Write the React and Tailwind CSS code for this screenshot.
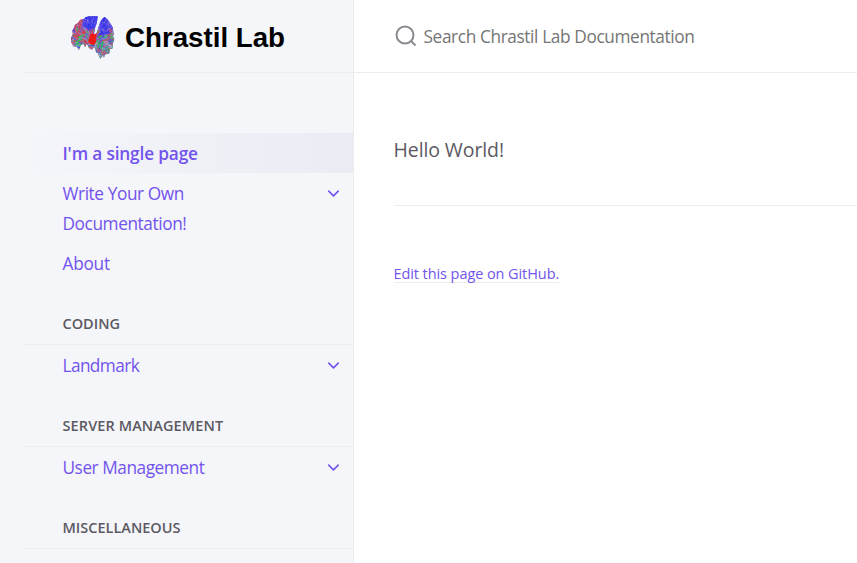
import { ChevronDown } from "lucide-react";

const BLUES = ["#3a35f0", "#4540e8", "#2f2fe0", "#6a5ae0", "#8a6fd8", "#5a50f0"];
const MIXED = ["#c84a76", "#4a4fe0", "#3fba6a", "#b2409c", "#6b6fd8", "#d0404c", "#9f9acc", "#a86570"];
const LOWER = ["#3cb868", "#c8506f", "#6b72cc", "#4fa894", "#ad7fa0", "#4a55c8", "#b85a70", "#b8b4cc"];
const REDS = ["#d23a4c", "#c84a3c", "#c8457a", "#b87088"];

// Fibre strands: short lines fanned around the stem, coloured by region.
function makeFibres() {
  let seed = 11;
  const rand = () => {
    seed = (seed * 16807) % 2147483647;
    return seed / 2147483647;
  };
  const fibres = [];
  for (let i = 0; i < 900; i++) {
    const x = 69 + rand() * 47;
    const y = 14 + rand() * 47;
    let set = MIXED;
    if (y < 28 && x > 82) set = BLUES;
    else if (x > 100 && x < 110 && y < 34) set = BLUES;
    else if (y > 41) set = LOWER;
    else if (x < 84 && rand() < 0.5) set = REDS;
    const angle = Math.atan2(46 - y, 94 - x) + (rand() - 0.5) * 0.9;
    const length = 2 + rand() * 3;
    fibres.push({
      x1: x,
      y1: y,
      x2: x + Math.cos(angle) * length,
      y2: y + Math.sin(angle) * length,
      color: set[Math.floor(rand() * set.length)],
    });
  }
  return fibres;
}

const FIBRES = makeFibres();

function BrainLogo() {
  return (
    <svg className="mt-[2px] h-[50px] w-[50px] shrink-0" viewBox="68 12 50 50" fill="none" strokeWidth="1.1">
      <defs>
        <clipPath id="hemispheres">
          <path d="M97.5 16.5L93 16L86 17L84 19L80 20L78 23L75 25L74 28L72 31L73 34L71 38L71.5 43L73.5 46.5L77 47L79 50L81 45L83.5 43.5L85 47L87 43L89 48L92 50L94 46L96 52L98 53L99 56L100.5 59L102 56L104 57.5L105.5 54L109 54L110 49L113 48L112.5 44L114.5 39L113 36L114 33L112 26L108 20L104.5 17L101 20.5L99 25.5L96.5 33.5L94 34.5L95 28L97 22Z" />
        </clipPath>
      </defs>
      <g clipPath="url(#hemispheres)">
        <rect x="68" y="12" width="50" height="50" fill="#9088c0" />
        <path d="M82 16h16l-3 13-12-2zM101 17h6l3 17h-11z" fill="#4a44e4" />
        {FIBRES.map((f, i) => (
          <line key={i} x1={f.x1} y1={f.y1} x2={f.x2} y2={f.y2} stroke={f.color} />
        ))}
        <path d="M78 38l6-3M76 42l6-3M75 45l4-2M98 38l4-2M99 42l-1 6M103 41l-2 8" stroke="#2fb858" strokeWidth="1.4" />
        <path d="M90.5 34l6-1-.5 9-2 3-4-1-2-2z" fill="#ee1a16" />
      </g>
    </svg>
  );
}

function NavLink({ children, expandable, textClass }) {
  return (
    <a href="#" className="flex min-h-10 justify-between pb-1 pl-[38.5px] pr-[10.5px] pt-[6px] text-[17.25px] leading-[30px] text-[#7253ed]">
      <span className={textClass}>{children}</span>
      {expandable && <ChevronDown className="mt-[4.5px] h-[19px] w-[19px]" strokeWidth={2} />}
    </a>
  );
}

function Category({ children, textClass }) {
  return (
    <h2 className="mt-[26px] flex h-[36px] items-center border-b border-[#eeebee] pb-[6px] pl-[38.5px] text-[14.5px] font-semibold uppercase text-[#5c5962]">
      <span className={textClass}>{children}</span>
    </h2>
  );
}

export default function App() {
  return (
    <div className="flex h-[563px] w-[857px] overflow-hidden bg-white font-['Open_Sans','Noto_Sans',sans-serif]">
      <aside className="w-[354px] border-r border-[#eeebee] bg-[#f5f6fa] pl-6">
        <header className="flex h-[73px] items-center border-b border-[#eeebee] pl-[44px]">
          <BrainLogo />
          <span className="ml-[7px] mt-[3px] whitespace-nowrap font-['Liberation_Sans',sans-serif] text-[27.7px] font-bold text-black">Chrastil Lab</span>
        </header>
        <nav className="pt-[60px]">
          <a href="#" className="flex h-10 items-center bg-linear-to-r from-[#ebedf500] to-[#eaecf4] pl-[38.5px] pt-[2px] text-[17.25px] font-semibold text-[#7253ed]">
            <span className="tracking-[-0.16px]">I'm a single page</span>
          </a>
          <NavLink expandable textClass="tracking-[-0.41px]">Write Your Own<br />Documentation!</NavLink>
          <NavLink textClass="tracking-[-0.25px]">About</NavLink>
          <Category>Coding</Category>
          <NavLink expandable textClass="tracking-[-0.6px]">Landmark</NavLink>
          <Category textClass="tracking-[0.1px]">Server Management</Category>
          <NavLink expandable textClass="tracking-[-0.46px]">User Management</NavLink>
          <Category>Miscellaneous</Category>
        </nav>
      </aside>
      <main className="flex-1">
        <div className="flex h-[73px] items-center border-b border-[#eeebee] pl-10">
          <svg className="h-6 w-6" viewBox="0 0 24 24" fill="none" stroke="#8b8990" strokeWidth="2">
            <circle cx="11" cy="11" r="8.5" /><path d="m21.5 21.5-4.5-4.5" />
          </svg>
          <span className="ml-[5.5px] mt-[2px] whitespace-nowrap text-[17.25px] tracking-[-0.38px] text-[#757575]">Search Chrastil Lab Documentation</span>
        </div>
        <div className="pl-[39.5px] pt-[61px]">
          <p className="text-[19.5px] leading-8 tracking-[-0.1px] text-[#5c5962]">Hello World!</p>
          <hr className="mt-[39px] border-[#eeebee]" />
          <footer className="flex pt-[58px]">
            <a href="#" className="h-[19px] border-b border-[#eeebee] text-[14.5px] leading-[19px] tracking-[-0.08px] text-[#7253ed]">Edit this page on GitHub.</a>
          </footer>
        </div>
      </main>
    </div>
  );
}
